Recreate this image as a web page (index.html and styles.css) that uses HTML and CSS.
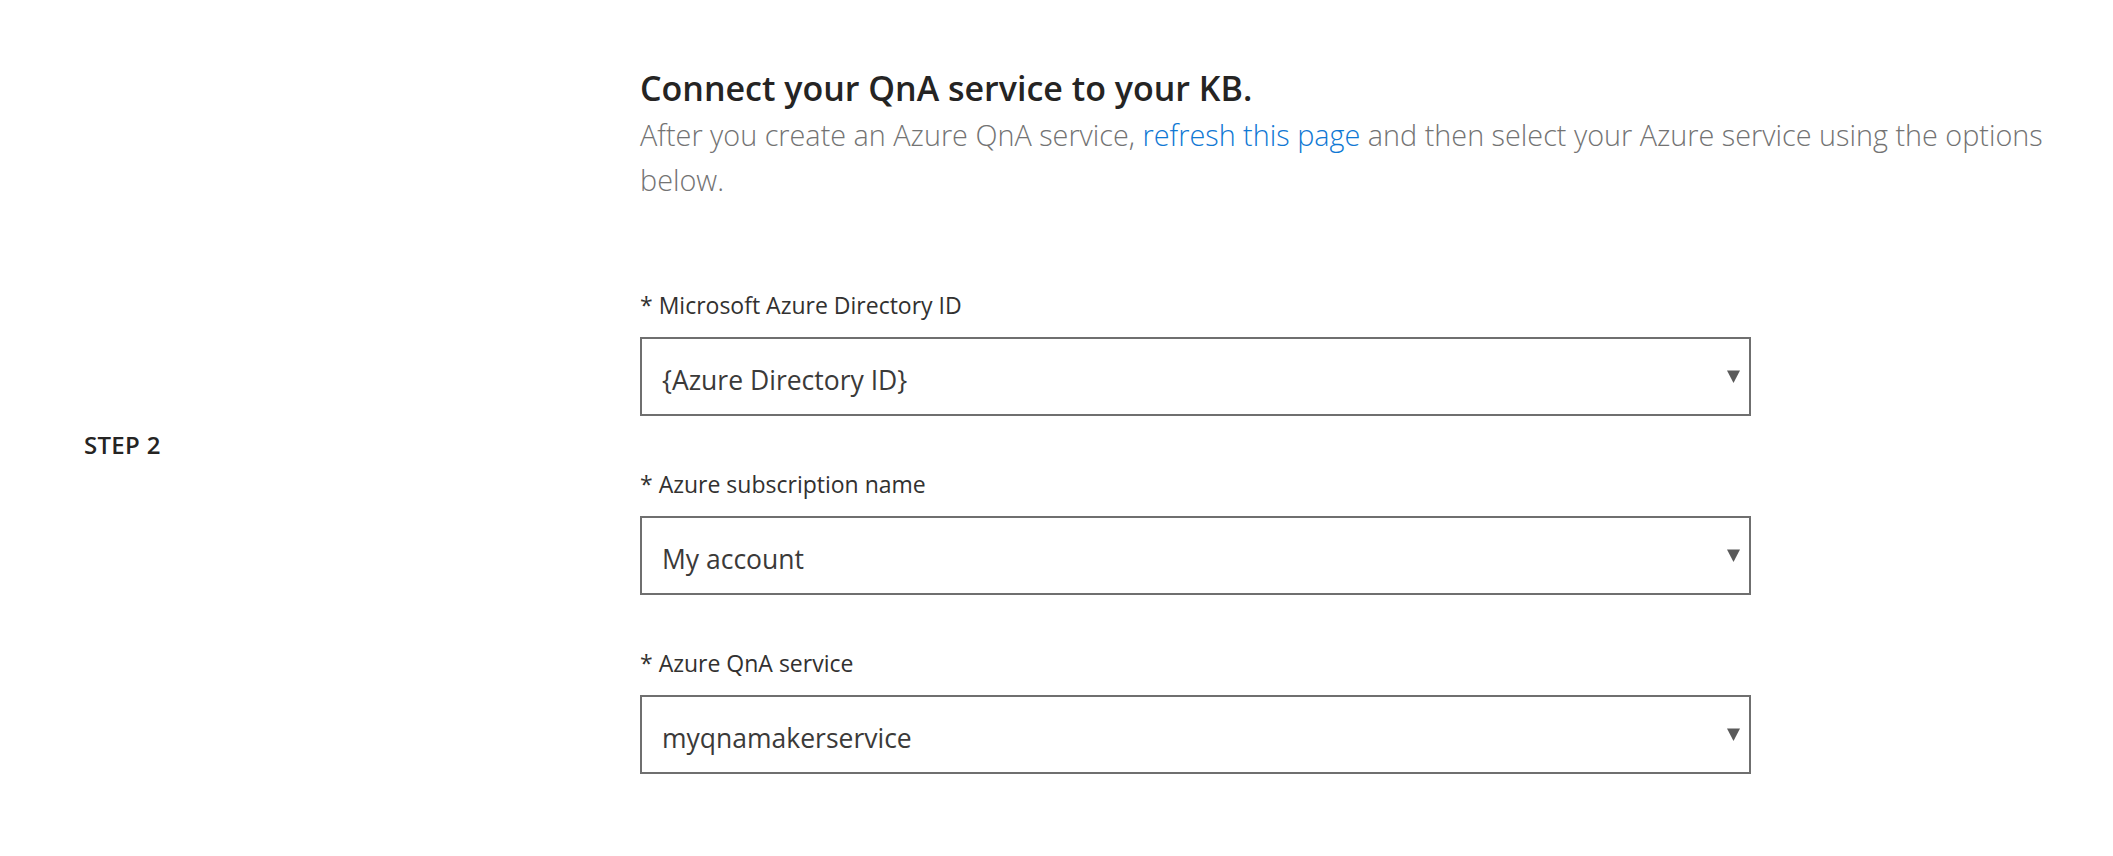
FILE: index.html
```html
<!DOCTYPE html>
<html lang="en">
<head>
<meta charset="utf-8">
<title>Connect your QnA service</title>
<link rel="stylesheet" href="styles.css">
</head>
<body>
<main class="page">
  <section class="step">
    <div class="step-name">STEP 2</div>
    <div class="step-body">
      <h1 class="title">Connect your QnA service to your KB.</h1>
      <p class="intro">After you create an Azure QnA service, <a class="link" href="#">refresh this page</a> and then select your Azure service using the options below.</p>

      <div class="field field-first">
        <label class="field-label">* Microsoft Azure Directory ID</label>
        <div class="select">
          <span class="select-value">{Azure Directory ID}</span>
          <svg class="select-arrow" width="13" height="13" viewBox="0 0 13 13"><path d="M0 0.5 H13 L6.5 13 Z" fill="#5a5a5a"/></svg>
        </div>
      </div>

      <div class="field">
        <label class="field-label">* Azure subscription name</label>
        <div class="select">
          <span class="select-value">My account</span>
          <svg class="select-arrow" width="13" height="13" viewBox="0 0 13 13"><path d="M0 0.5 H13 L6.5 13 Z" fill="#5a5a5a"/></svg>
        </div>
      </div>

      <div class="field">
        <label class="field-label">* Azure QnA service</label>
        <div class="select">
          <span class="select-value">myqnamakerservice</span>
          <svg class="select-arrow" width="13" height="13" viewBox="0 0 13 13"><path d="M0 0.5 H13 L6.5 13 Z" fill="#5a5a5a"/></svg>
        </div>
      </div>
    </div>
  </section>
</main>
</body>
</html>
```

FILE: styles.css
```css
html, body {
  margin: 0;
  padding: 0;
  background: #ffffff;
}

body {
  font-family: "Open Sans", "Noto Sans", "Liberation Sans", sans-serif;
  color: #252423;
}

.page {
  padding: 65px 0 60px 84px;
}

.step {
  display: flex;
  align-items: flex-start;
}

.step-name {
  width: 556px;
  flex: none;
  padding-top: 365px;
  font-size: 24px;
  font-weight: 600;
  line-height: 30px;
  color: #252423;
  letter-spacing: 0.3px;
}

.step-body {
  width: 1460px;
  flex: none;
}

.title {
  margin: 0;
  font-size: 34px;
  font-weight: 600;
  line-height: 46px;
  color: #252423;
}

.intro {
  margin: 1px 0 0;
  font-size: 28.8px;
  font-weight: 300;
  line-height: 45px;
  color: #737373;
  width: 1440px;
}

.link {
  color: #0f78d4;
  text-decoration: none;
}

.field {
  margin-top: 54px;
  width: 1111px;
}

.field-first {
  margin-top: 89px;
}

.field-label {
  display: block;
  font-size: 23px;
  line-height: 28px;
  color: #323130;
  margin-bottom: 18px;
}

.select {
  box-sizing: border-box;
  height: 79px;
  border: 2px solid #6f6f6f;
  display: flex;
  align-items: center;
  justify-content: space-between;
  padding: 0 9px 0 20px;
}

.select-value {
  font-size: 26.5px;
  color: #3b3a39;
  line-height: 36px;
  margin-top: 6px;
}

.select-arrow {
  display: block;
  flex: none;
}
```
